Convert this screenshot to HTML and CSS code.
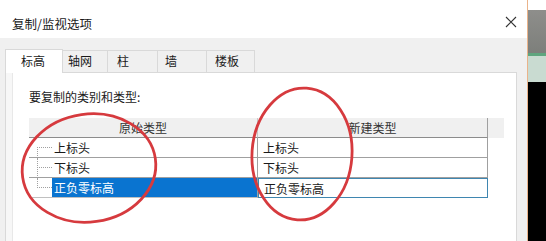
FILE: index.html
```html
<!DOCTYPE html>
<html lang="zh-CN">

<head>
    <meta charset="UTF-8">
    <title>复制/监视选项</title>
    <link rel="stylesheet" href="styles.css">
</head>

<body>
    <div class="screen">
        <div class="dialog">
            <!-- title bar -->
            <div class="titlebar">
                <span class="title">复制/监视选项</span>
                <svg class="close" width="12" height="12" viewBox="0 0 12 12">
                    <path d="M1 1 L11 11 M11 1 L1 11" stroke="#333" stroke-width="1.1" fill="none" />
                </svg>
            </div>

            <div class="dialog-body">
                <div class="tabs">
                    <div class="tab active">标高</div>
                    <div class="tab">轴网</div>
                    <div class="tab">柱</div>
                    <div class="tab">墙</div>
                    <div class="tab">楼板</div>
                </div>

                <div class="panel">
                    <div class="panel-inner">
                        <div class="caption">要复制的类别和类型:</div>

                        <div class="grid">
                            <div class="head">原始类型</div>
                            <div class="head">新建类型</div>
                            <div class="head blank"></div>

                            <div class="cell first"><span class="tree top"></span><span class="txt">上标头</span></div>
                            <div class="cell">上标头</div>
                            <div class="gap"></div>

                            <div class="cell first"><span class="tree mid"></span><span class="txt">下标头</span></div>
                            <div class="cell">下标头</div>
                            <div class="gap"></div>

                            <div class="cell first last"><span class="tree end"></span><span class="txt sel">正负零标高</span></div>
                            <div class="cell edit">正负零标高</div>
                            <div class="gap"></div>
                        </div>
                    </div>
                </div>
            </div>
        </div>

        <!-- background window peeking on the right -->
        <div class="side">
            <div class="side-white"></div>
            <div class="side-gray"></div>
            <div class="side-green"></div>
            <div class="side-light"></div>
            <div class="side-black"></div>
        </div>

        <!-- red hand-drawn marks -->
        <svg class="marks" width="546" height="241" viewBox="0 0 546 241">
            <ellipse cx="89" cy="168" rx="67" ry="54" transform="rotate(-8 89 168)" stroke="#d63a3e" stroke-width="2.8" fill="none" />
            <ellipse cx="302" cy="154" rx="50" ry="66" transform="rotate(4 302 154)" stroke="#d63a3e" stroke-width="2.8" fill="none" />
        </svg>
    </div>
</body>

</html>
```

FILE: styles.css
```css
body {
    margin: 0;
    font-family: "Noto Sans CJK SC", "Microsoft YaHei", sans-serif;
    font-size: 12px;
    color: #1a1a1a;
    background-color: #fff;
}

.screen {
    position: relative;
    width: 546px;
    height: 241px;
    overflow: hidden;
    display: flex;
}

.dialog {
    width: 528px;
    display: flex;
    flex-direction: column;
}

.titlebar {
    height: 38px;
    display: flex;
    align-items: center;
    justify-content: space-between;
    padding: 0 10px 0 12px;
    background-color: #fff;
    box-sizing: border-box;
}

.title {
    font-size: 12.5px;
    margin-top: 8px;
}

.close {
    margin-top: 6px;
}

.dialog-body {
    flex: 1;
    background-color: #f0f0f0;
    padding: 10px 10px 0 5px;
    display: flex;
    flex-direction: column;
}

.tabs {
    display: flex;
    align-items: flex-end;
    height: 24px;
}

.tab {
    height: 22px;
    box-sizing: border-box;
    line-height: 20px;
    border: 1px solid #d9d9d9;
    border-bottom: none;
    border-left: none;
    background-color: #f0f0f0;
}

.tab:nth-child(1) { width: 58px; padding-left: 15px; }
.tab:nth-child(2) { width: 45px; padding-left: 5px; }
.tab:nth-child(3) { width: 50px; padding-left: 9px; }
.tab:nth-child(4) { width: 49px; padding-left: 7px; }
.tab:nth-child(5) { width: 48px; padding-left: 8px; }

.tab.active {
    height: 24px;
    background-color: #fff;
    border-left: 1px solid #d9d9d9;
    line-height: 22px;
    position: relative;
    z-index: 1;
    margin-bottom: -1px;
}

.panel {
    flex: 1;
    border: 1px solid #d9d9d9;
    border-bottom: none;
    background-color: #f7f7f7;
    padding-left: 6px;
}

.panel-inner {
    height: 100%;
    background-color: #fff;
    border-left: 1px solid #e8e8e8;
    padding: 16px 0 0 16px;
    box-sizing: border-box;
}

.caption {
    line-height: 16px;
    margin-bottom: 13px;
}

.grid {
    display: grid;
    grid-template-columns: 229px 230px 16px;
    grid-auto-rows: 20px;
}

.head {
    background-color: #f0f0f0;
    border-bottom: 1px solid #8c8c8c;
    border-right: 1px solid #a0a0a0;
    text-align: center;
    line-height: 19px;
    color: #333;
    height: 19px;
    box-sizing: content-box;
}

.head.blank {
    border-right: none;
    border-bottom: none;
    height: 20px;
}

.grid > .head:first-child {
    border-right: 1px solid #c8c8c8;
}

.cell {
    box-sizing: border-box;
    border-bottom: 1px solid #a0a0a0;
    border-right: 1px solid #a0a0a0;
    line-height: 19px;
    padding-left: 5px;
    white-space: nowrap;
}

.cell.first {
    display: flex;
    padding-left: 0;
}

.cell.last {
    border-bottom-color: #c0c0c0;
}

.tree {
    position: relative;
    width: 23px;
    flex: none;
}

.tree::before {
    content: "";
    position: absolute;
    left: 8px;
    border-left: 1px dotted #a0a0a0;
}

.tree::after {
    content: "";
    position: absolute;
    left: 8px;
    top: 9px;
    width: 15px;
    border-top: 1px dotted #a0a0a0;
}

.tree.top::before {
    top: 9px;
    bottom: -1px;
}

.tree.mid::before {
    top: 0;
    bottom: -1px;
}

.tree.end::before {
    top: 0;
    height: 10px;
}

.txt {
    padding-left: 2px;
    flex: 1;
}

.txt.sel {
    background-color: #0a74d0;
    color: #fff;
}

.cell.edit {
    border: 1px solid #3f86b0;
    background-color: #fff;
}

.gap {
    background-color: #fff;
}

.side {
    width: 18px;
    border-left: 1px solid #eab38a;
    display: flex;
    flex-direction: column;
}

.side-white {
    height: 10px;
    background-color: #fff;
}

.side-gray {
    height: 43px;
    background: linear-gradient(#8e8e8b, #7d7f7b);
}

.side-green {
    height: 3px;
    background-color: #5fa57e;
}

.side-light {
    height: 26px;
    background-color: #c9dbd1;
}

.side-black {
    flex: 1;
    background-color: #000;
}

.marks {
    position: absolute;
    left: 0;
    top: 0;
    pointer-events: none;
}
```
